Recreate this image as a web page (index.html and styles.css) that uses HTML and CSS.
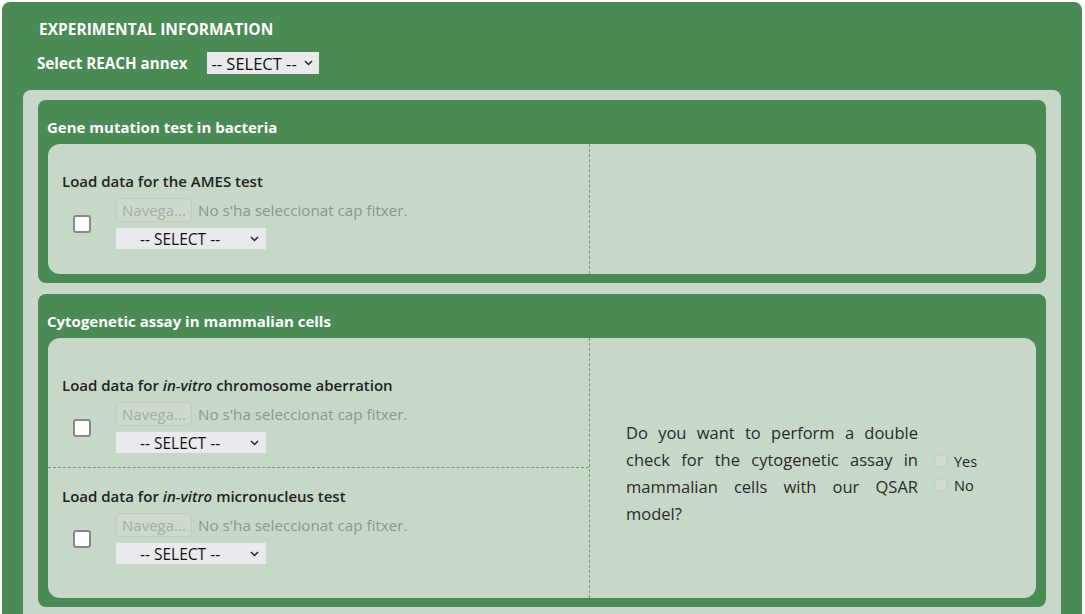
FILE: index.html
```html
<!DOCTYPE html>
<html>
<head>
<meta charset="utf-8">
<link rel="stylesheet" href="styles.css">
</head>
<body>
<div class="panel">
  <h2 class="panel-title">EXPERIMENTAL INFORMATION</h2>
  <div class="annex">
    <span class="annex-label">Select REACH annex</span>
    <span class="sel sel-top">
      <select><option>-- SELECT --</option></select>
      <svg class="chev" width="9" height="6" viewBox="0 0 9 6"><path d="M1 1l3.5 3.5L8 1" fill="none" stroke="#222" stroke-width="1.5"/></svg>
    </span>
  </div>
  <div class="inner">
    <section class="card">
      <h3 class="card-title">Gene mutation test in bacteria</h3>
      <div class="box">
        <div class="left">
          <div class="cell cell-ames">
            <div class="cell-title">Load data for the AMES test</div>
            <div class="ctrl">
              <input type="checkbox" class="chk">
              <div class="ctrl-col">
                <div class="file"><button class="file-btn" disabled>Navega...</button><span class="file-txt">No s'ha seleccionat cap fitxer.</span></div>
                <span class="sel sel-in">
                  <select><option>-- SELECT --</option></select>
                  <svg class="chev" width="9" height="6" viewBox="0 0 9 6"><path d="M1 1l3.5 3.5L8 1" fill="none" stroke="#222" stroke-width="1.5"/></svg>
                </span>
              </div>
            </div>
          </div>
        </div>
        <div class="right"></div>
      </div>
    </section>
    <section class="card">
      <h3 class="card-title">Cytogenetic assay in mammalian cells</h3>
      <div class="box">
        <div class="left">
          <div class="cell cell-chrom">
            <div class="cell-title">Load data for <em>in-vitro</em> chromosome aberration</div>
            <div class="ctrl">
              <input type="checkbox" class="chk">
              <div class="ctrl-col">
                <div class="file"><button class="file-btn" disabled>Navega...</button><span class="file-txt">No s'ha seleccionat cap fitxer.</span></div>
                <span class="sel sel-in">
                  <select><option>-- SELECT --</option></select>
                  <svg class="chev" width="9" height="6" viewBox="0 0 9 6"><path d="M1 1l3.5 3.5L8 1" fill="none" stroke="#222" stroke-width="1.5"/></svg>
                </span>
              </div>
            </div>
          </div>
          <div class="cell cell-micro">
            <div class="cell-title">Load data for <em>in-vitro</em> micronucleus test</div>
            <div class="ctrl">
              <input type="checkbox" class="chk">
              <div class="ctrl-col">
                <div class="file"><button class="file-btn" disabled>Navega...</button><span class="file-txt">No s'ha seleccionat cap fitxer.</span></div>
                <span class="sel sel-in">
                  <select><option>-- SELECT --</option></select>
                  <svg class="chev" width="9" height="6" viewBox="0 0 9 6"><path d="M1 1l3.5 3.5L8 1" fill="none" stroke="#222" stroke-width="1.5"/></svg>
                </span>
              </div>
            </div>
          </div>
        </div>
        <div class="right right-q">
          <p class="question">Do you want to perform a double check for the cytogenetic assay in mammalian cells with our QSAR model?</p>
          <div class="radios">
            <label class="radio"><input type="radio" name="dc" disabled><span>Yes</span></label>
            <label class="radio"><input type="radio" name="dc" disabled><span>No</span></label>
          </div>
        </div>
      </div>
    </section>
  </div>
</div>
</body>
</html>
```

FILE: styles.css
```css
html, body {
  margin: 0;
  padding: 0;
  background: #ffffff;
}
body {
  font-family: "Open Sans", "Noto Sans", "DejaVu Sans", sans-serif;
  color: #222;
  height: 614px;
  overflow: hidden;
}
.panel {
  margin: 2px 3px 0 2px;
  background: #4a8a55;
  border-radius: 8px 8px 0 0;
  padding: 17px 21px 0 21px;
  min-height: 700px;
  box-sizing: border-box;
}
.panel-title {
  margin: 0 0 0 16px;
  font-size: 15.5px;
  font-weight: 700;
  line-height: 20px;
  color: #fff;
}
.annex {
  display: flex;
  align-items: center;
  margin: 13px 0 0 14px;
  height: 22px;
}
.annex-label {
  color: #fff;
  font-weight: 700;
  font-size: 15.2px;
  margin-right: 20px;
}
.sel {
  position: relative;
  display: block;
  align-self: flex-start;
}
.sel select {
  -webkit-appearance: none;
  appearance: none;
  border: none;
  border-radius: 0;
  background: #e9e9ee;
  color: #111;
  font-family: inherit;
  font-size: 15.5px;
  margin: 0;
  display: block;
  outline: none;
}
.sel-top select {
  width: 112px;
  height: 22px;
  padding: 0 0 0 4px;
  font-size: 16.5px;
}
.sel-in select {
  width: 150px;
  height: 21px;
  padding: 0 0 0 24px;
}
.chev {
  position: absolute;
  right: 6px;
  top: 8px;
  pointer-events: none;
}
.sel-in .chev {
  right: 7px;
  top: 8px;
}
.inner {
  margin-top: 16px;
  background: #c8d8c8;
  border-radius: 8px;
  padding: 10px 15px 10px 15px;
}
.card {
  background: #4a8a55;
  border-radius: 8px;
  padding: 0 10px 9px 10px;
  margin-bottom: 11px;
}
.card-title {
  margin: 0 0 0 -1px;
  padding: 17px 0 7px 0;
  line-height: 20px;
  font-size: 15px;
  font-weight: 700;
  color: #fff;
}
.box {
  background: #c8d8c8;
  border-radius: 12px;
  display: grid;
  grid-template-columns: 542px 1fr;
}
.left {
  border-right: 1px dashed #6e9f74;
}
.cell {
  padding-left: 14px;
  box-sizing: border-box;
}
.cell-ames {
  height: 130px;
  padding-top: 27px;
}
.cell-chrom {
  height: 130px;
  padding-top: 37px;
  border-bottom: 1px dashed #6e9f74;
}
.cell-micro {
  height: 130px;
  padding-top: 18px;
}
.cell-title {
  font-size: 15px;
  font-weight: 600;
  line-height: 20px;
  color: #222;
}
.cell-title em {
  font-style: italic;
}
.ctrl {
  display: flex;
  align-items: center;
  margin-top: 7px;
}
.chk {
  -webkit-appearance: none;
  appearance: none;
  width: 18px;
  height: 18px;
  margin: 0 25px 0 11px;
  border: 2px solid #878787;
  border-radius: 3px;
  background: #fff;
  box-sizing: border-box;
  flex: none;
}
.ctrl-col {
  display: flex;
  flex-direction: column;
  gap: 6px;
}
.file {
  display: flex;
  align-items: center;
  height: 24px;
}
.file-btn {
  height: 24px;
  width: 76px;
  box-sizing: border-box;
  border: 1px solid #bfcdbf;
  border-radius: 3px;
  background: #cdd9cd;
  color: #a4aea4;
  font-family: inherit;
  font-size: 15px;
  padding: 0 2px;
  margin: 0 6px 0 0;
  white-space: nowrap;
  overflow: hidden;
}
.file-txt {
  color: #8c968c;
  font-size: 15.2px;
}
.right-q {
  display: flex;
  align-items: center;
  padding: 10px 0 0 36px;
}
.question {
  margin: 0;
  width: 292px;
  text-align: justify;
  font-size: 16.5px;
  line-height: 27px;
  color: #2a2a2a;
}
.radios {
  display: flex;
  flex-direction: column;
  gap: 4px;
  margin-left: 16px;
}
.radio {
  display: flex;
  align-items: center;
  font-size: 14.5px;
  color: #222;
  height: 20px;
}
.radio input {
  -webkit-appearance: none;
  appearance: none;
  width: 14px;
  height: 14px;
  margin: 0 6px 0 0;
  border: 1px solid #bccabc;
  border-radius: 50%;
  background: #d3ddd3;
  box-sizing: border-box;
}
```
